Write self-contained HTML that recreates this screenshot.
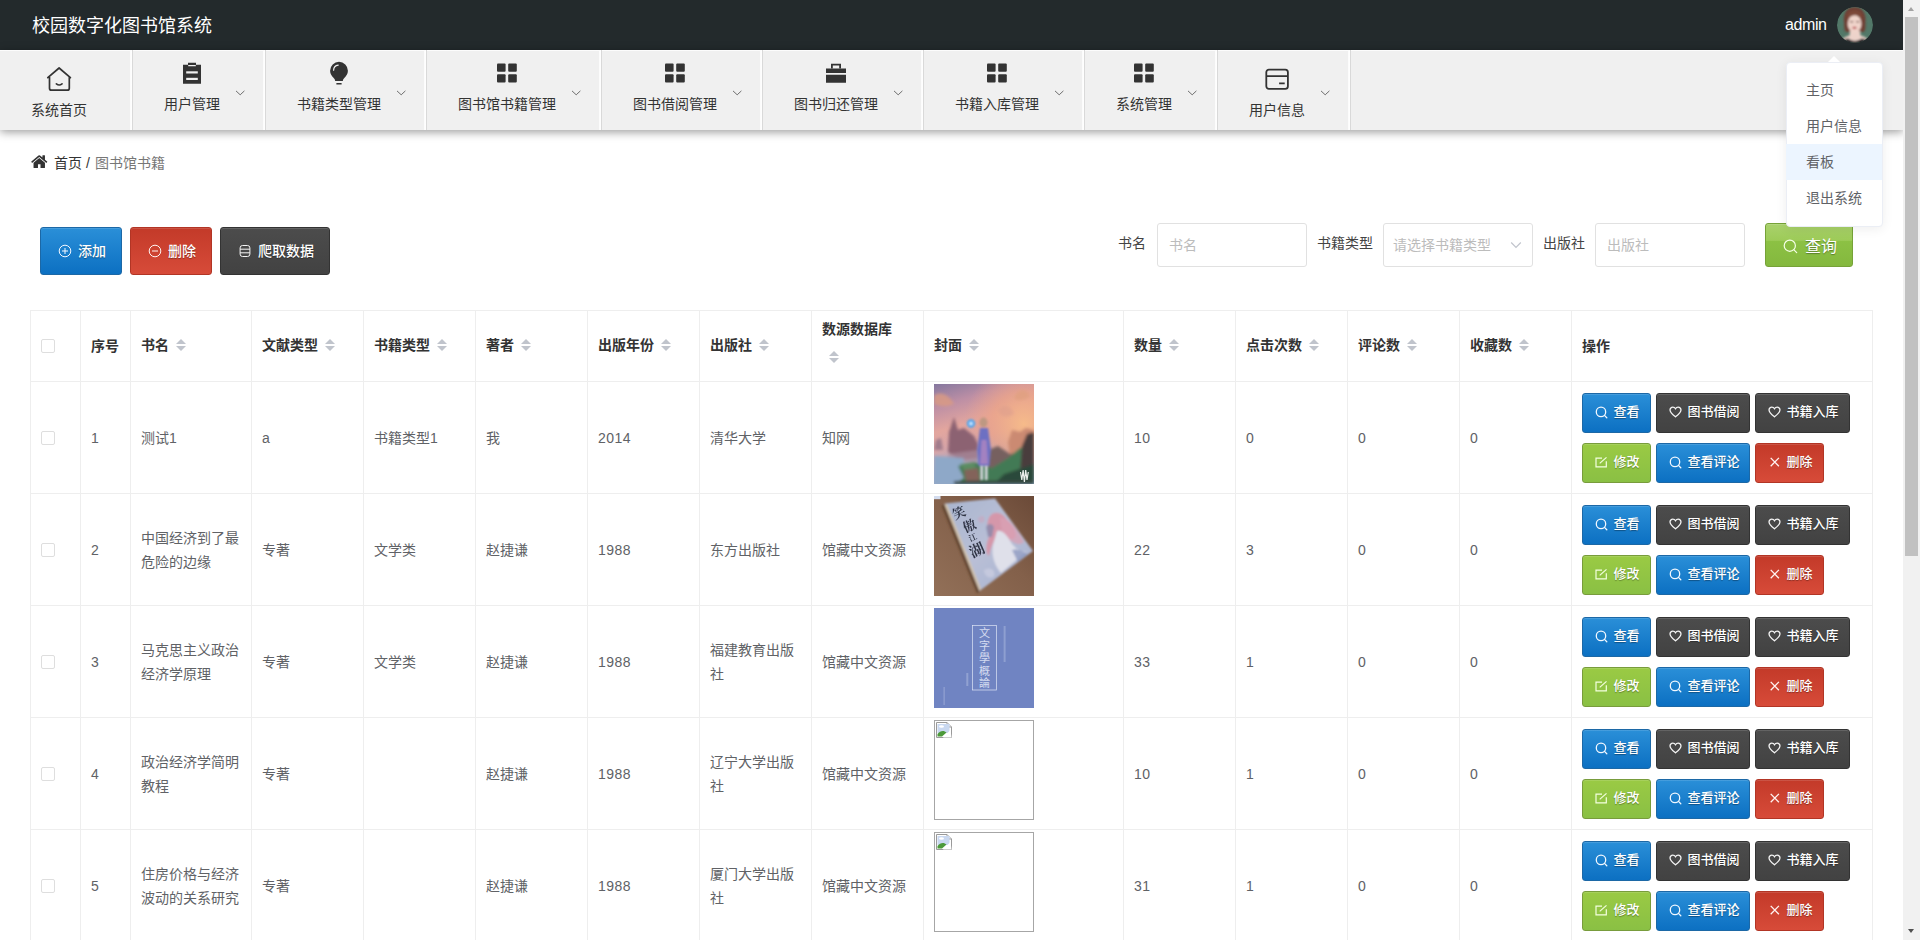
<!DOCTYPE html>
<html lang="zh-CN">
<head>
<meta charset="utf-8">
<title>校园数字化图书馆系统</title>
<style>
*{box-sizing:border-box;margin:0;padding:0}
html,body{width:1920px;height:940px;overflow:hidden;background:#fff}
body{position:relative;font-family:"Liberation Sans","Noto Sans CJK SC",sans-serif;font-size:14px;color:#606266}
.abs{position:absolute}
/* scrollbar */
#sb{position:absolute;left:1903px;top:0;width:17px;height:940px;background:#f1f1f1}
#sb .thumb{position:absolute;left:2px;top:17px;width:13px;height:539px;background:#c1c1c1}
#sb .up{position:absolute;left:5px;top:7px;width:0;height:0;border-left:3.5px solid transparent;border-right:3.5px solid transparent;border-bottom:4px solid #a3a3a3}
#sb .down{position:absolute;left:5px;top:929px;width:0;height:0;border-left:3.5px solid transparent;border-right:3.5px solid transparent;border-top:4px solid #505050}
/* header */
#hd{position:absolute;left:0;top:0;width:1903px;height:50px;background:#232a2c}
#hd .title{position:absolute;left:32px;top:1px;height:50px;line-height:50px;font-size:18px;color:#fff;white-space:nowrap}
#hd .user{position:absolute;left:1785px;top:0;height:50px;line-height:50px;font-size:16px;color:#fff;letter-spacing:-0.4px}
#avatar{position:absolute;left:1837px;top:7px;width:36px;height:36px;border-radius:50%;overflow:hidden}
/* nav */
#nav{position:absolute;left:0;top:50px;width:1903px;height:80px;background:#f0f0f0;border-top:1px solid #fcfcfc;box-shadow:0 2px 9px rgba(0,0,0,.4)}
.ni{position:absolute;top:-1px;height:80px}
.ni .sep{position:absolute;right:0;top:0;width:3px;height:80px;background:linear-gradient(90deg,#fbfbfb 0,#fff 66%,#d9d9d9 66%)}
.ni .t{position:absolute;left:31px;white-space:nowrap;font-size:14px;color:#333;line-height:20px}
.ni .ar{position:absolute;top:39px;width:12px;height:8px}
.ni svg.ic{position:absolute}
/* breadcrumb */
#bc{position:absolute;left:30px;top:153px;height:20px;line-height:20px;font-size:14px;color:#333;white-space:nowrap}
/* buttons */
.btn{position:absolute;border-radius:3px;color:#fff;font-size:14px;font-weight:500;white-space:nowrap;text-shadow:0 1px 1px rgba(0,0,0,.35);border:1px solid rgba(0,0,0,.25);box-shadow:inset 0 1px 0 rgba(255,255,255,.13)}
.b-blue{background:linear-gradient(#2a8fd8,#0c70c2);border-color:#1c68a6}
.b-red{background:linear-gradient(#c33a29,#d74b39);border-color:#b23525}
.b-dark{background:linear-gradient(#4c4c4c,#424242);border-color:#333}
.b-green{background:linear-gradient(#9aca44,#8ac044);border-color:#789c3c}
.b-gloss{background:linear-gradient(#a9d16c 0,#9dcb58 39%,#8cc144 41%,#84b83e 100%);border-color:#76a238}
.rb{font-size:13px}
.btn svg{position:absolute}
.btn span{position:absolute;line-height:20px}
/* form */
.lbl{position:absolute;font-size:14px;color:#444;line-height:20px;white-space:nowrap}
.inp{position:absolute;top:223px;width:150px;height:44px;border:1px solid #e1e1e1;border-radius:3px;background:#fff;color:#bcbcbc;font-size:14px;line-height:42px;padding-left:11px;white-space:nowrap}
/* table */
#tb{position:absolute;left:30px;top:310px;width:1843px;height:640px;border-left:1px solid #eee;border-top:1px solid #eee}
.vl{position:absolute;top:311px;width:1px;height:629px;background:#eee}
.hl{position:absolute;left:31px;width:1842px;height:1px;background:#eee}
.th{position:absolute;font-size:14px;font-weight:bold;color:#333;line-height:23px;white-space:nowrap}
.td{position:absolute;font-size:14px;color:#606266;line-height:24px}
.num{letter-spacing:.5px}
.cb{position:absolute;left:41px;width:14px;height:14px;border:1px solid #dedede;border-radius:2px;background:#fff}
.sort{position:absolute;width:10px;height:14px}
.sort:before,.sort:after{content:"";position:absolute;left:0;border:5px solid transparent}
.sort:before{top:-4px;border-bottom-color:#c0c4cc}
.sort:after{top:8px;border-top-color:#c0c4cc}
/* dropdown */
#dd{position:absolute;left:1785.500px;top:61.500px;width:97px;height:165px;background:#fff;border:1px solid #ebeef5;border-radius:4px;box-shadow:0 2px 12px rgba(0,0,0,.07)}
#dd div{position:absolute;left:-.5px;width:96px;height:36px;line-height:36px;padding-left:20px;font-size:14px;color:#606266;white-space:nowrap}
#dd div.on{background:#ecf5ff}
#dd:before{content:"";position:absolute;left:41px;top:-7px;border:6px solid transparent;border-top-width:0;border-bottom-color:#fff}
</style>
</head>
<body>
<div id="hd"><div class="title">校园数字化图书馆系统</div><div class="user">admin</div>
<svg id="avatar" width="36" height="36" viewBox="0 0 36 36"><defs><filter id="avb" x="-20%" y="-20%" width="140%" height="140%"><feGaussianBlur stdDeviation="0.900"/></filter><clipPath id="avc"><circle cx="18" cy="18" r="18"/></clipPath></defs>
<g clip-path="url(#avc)"><rect width="36" height="36" fill="#527868"/><g filter="url(#avb)">
<path d="M17.500 0C9 0 6 7.500 7 15C7.500 20 6.500 23.500 9.500 25L26.500 25C29.500 22.500 28 19 28.500 15C29.500 7.500 26 0 17.500 0z" fill="#6f4034"/>
<path d="M13 24L12.500 28.500C9 29.500 6 31 3.500 34L3.500 37H32.500V34C30 31 27 29.500 23.500 28.500L23 24z" fill="#edd3ca"/>
<ellipse cx="17.600" cy="16.800" rx="6.900" ry="8.900" fill="#f0d4ca"/>
<path d="M10.300 13C11.500 9 14.500 7.800 18 8.200C21 7.500 24 9 25.200 13.500C26.500 7 23 3.200 17.500 3.200C12 3.200 9.200 7 10.300 13z" fill="#7d4838"/>
<ellipse cx="17.500" cy="20.800" rx="2.200" ry="1.100" fill="#b9444d"/>
<path d="M13 14.800h3.200M19.200 14.800h3.200" stroke="#5e423c" stroke-width="1"/>
<path d="M0 37C3 33.500 8 32 11.500 31.500C14 34.800 21.500 34.800 24.300 31.500C28 32 33 33.500 36 37z" fill="#1b1f21"/>
</g></g></svg>

</div>
<div id="nav">
<div class="ni" style="left:0px;width:133px">
<svg class="ic" style="left:46px;top:16px" width="26" height="26" viewBox="0 0 26 26"><path fill="none" stroke="#333" stroke-width="1.700" stroke-linejoin="round" stroke-linecap="round" d="M3.500 11.300V22.200a2 2 0 0 0 2 2H21.300a2 2 0 0 0 2-2V11.300 M1.800 11.700L13.100 2L24.400 11.700"/><path fill="none" stroke="#333" stroke-width="1.700" stroke-linecap="round" d="M10.400 17.900q2.800 2.200 5.600 0"/></svg>
<div class="t" style="top:50px">系统首页</div>
<div class="sep"></div></div>
<div class="ni" style="left:133px;width:133px">
<svg class="ic" style="left:49px;top:12px" width="20" height="22" viewBox="0 0 20 22"><path fill="#333" d="M1 2.7h5.2v1.6h7.6V2.7H19v19H1z M6 0.8h8v2.3H6z"/><rect x="4.2" y="9.3" width="11.6" height="2.2" fill="#f0f0f0"/><rect x="4.2" y="15.8" width="11.6" height="2.2" fill="#f0f0f0"/></svg>
<div class="t" style="top:44px">用户管理</div>
<svg class="ar" style="left:102px" width="12" height="8" viewBox="0 0 12 8"><path d="M1 1.900L5.200 5.800L9.400 1.900" fill="none" stroke="#6e6e6e" stroke-width="1"/></svg>
<div class="sep"></div></div>
<div class="ni" style="left:266px;width:161px">
<svg class="ic" style="left:63px;top:11px" width="20" height="24" viewBox="0 0 20 24"><path fill="#333" d="M10 0.8a8.9 8.9 0 0 1 8.9 8.9c0 3.2-1.7 5.4-3.6 7.2-.9.9-1.3 1.700-1.500 3.200H6.200c-.2-1.500-.6-2.300-1.500-3.200C2.800 15.100 1.100 12.900 1.100 9.700A8.900 8.900 0 0 1 10 .8z"/><rect x="7.3" y="21.9" width="5.400" height="1.600" rx=".5" fill="#333"/><path d="M4.600 9.200a5.300 5.300 0 0 1 4.600-5.100" fill="none" stroke="#f0f0f0" stroke-width="1.200" stroke-linecap="round"/></svg>
<div class="t" style="top:44px">书籍类型管理</div>
<svg class="ar" style="left:130px" width="12" height="8" viewBox="0 0 12 8"><path d="M1 1.900L5.200 5.800L9.400 1.900" fill="none" stroke="#6e6e6e" stroke-width="1"/></svg>
<div class="sep"></div></div>
<div class="ni" style="left:427px;width:175px">
<svg class="ic" style="left:70px;top:13px" width="20" height="20" viewBox="0 0 20 20"><g fill="#333"><rect x="0" y="0.5" width="8.6" height="8.2" rx="1"/><rect x="11.2" y="0.5" width="8.6" height="8.2" rx="1"/><rect x="0" y="11.3" width="8.6" height="8.2" rx="1"/><rect x="11.2" y="11.3" width="8.6" height="8.2" rx="1"/></g></svg>
<div class="t" style="top:44px">图书馆书籍管理</div>
<svg class="ar" style="left:144px" width="12" height="8" viewBox="0 0 12 8"><path d="M1 1.900L5.200 5.800L9.400 1.900" fill="none" stroke="#6e6e6e" stroke-width="1"/></svg>
<div class="sep"></div></div>
<div class="ni" style="left:602px;width:161px">
<svg class="ic" style="left:63px;top:13px" width="20" height="20" viewBox="0 0 20 20"><g fill="#333"><rect x="0" y="0.5" width="8.6" height="8.2" rx="1"/><rect x="11.2" y="0.5" width="8.6" height="8.2" rx="1"/><rect x="0" y="11.3" width="8.6" height="8.2" rx="1"/><rect x="11.2" y="11.3" width="8.6" height="8.2" rx="1"/></g></svg>
<div class="t" style="top:44px">图书借阅管理</div>
<svg class="ar" style="left:130px" width="12" height="8" viewBox="0 0 12 8"><path d="M1 1.900L5.200 5.800L9.400 1.900" fill="none" stroke="#6e6e6e" stroke-width="1"/></svg>
<div class="sep"></div></div>
<div class="ni" style="left:763px;width:161px">
<svg class="ic" style="left:63px;top:13px" width="20" height="20" viewBox="0 0 20 20"><path fill="#333" d="M0 5.400h20v4.500H0z M0 11.800h20v8H0z"/><path fill="none" stroke="#333" stroke-width="1.800" d="M5.900 5.600V1.600h8.200v4"/></svg>
<div class="t" style="top:44px">图书归还管理</div>
<svg class="ar" style="left:130px" width="12" height="8" viewBox="0 0 12 8"><path d="M1 1.900L5.200 5.800L9.400 1.900" fill="none" stroke="#6e6e6e" stroke-width="1"/></svg>
<div class="sep"></div></div>
<div class="ni" style="left:924px;width:161px">
<svg class="ic" style="left:63px;top:13px" width="20" height="20" viewBox="0 0 20 20"><g fill="#333"><rect x="0" y="0.5" width="8.6" height="8.2" rx="1"/><rect x="11.2" y="0.5" width="8.6" height="8.2" rx="1"/><rect x="0" y="11.3" width="8.6" height="8.2" rx="1"/><rect x="11.2" y="11.3" width="8.6" height="8.2" rx="1"/></g></svg>
<div class="t" style="top:44px">书籍入库管理</div>
<svg class="ar" style="left:130px" width="12" height="8" viewBox="0 0 12 8"><path d="M1 1.900L5.200 5.800L9.400 1.900" fill="none" stroke="#6e6e6e" stroke-width="1"/></svg>
<div class="sep"></div></div>
<div class="ni" style="left:1085px;width:133px">
<svg class="ic" style="left:49px;top:13px" width="20" height="20" viewBox="0 0 20 20"><g fill="#333"><rect x="0" y="0.5" width="8.6" height="8.2" rx="1"/><rect x="11.2" y="0.5" width="8.6" height="8.2" rx="1"/><rect x="0" y="11.3" width="8.6" height="8.2" rx="1"/><rect x="11.2" y="11.3" width="8.6" height="8.2" rx="1"/></g></svg>
<div class="t" style="top:44px">系统管理</div>
<svg class="ar" style="left:102px" width="12" height="8" viewBox="0 0 12 8"><path d="M1 1.900L5.200 5.800L9.400 1.900" fill="none" stroke="#6e6e6e" stroke-width="1"/></svg>
<div class="sep"></div></div>
<div class="ni" style="left:1218px;width:133px">
<svg class="ic" style="left:46px;top:18px" width="26" height="23" viewBox="0 0 26 23"><rect x="2.300" y="1.700" width="21.600" height="19.200" rx="2.600" fill="none" stroke="#333" stroke-width="1.800"/><path stroke="#333" stroke-width="1.800" d="M2.300 8.100H23.900 M15.100 15.300H20.700"/></svg>
<div class="t" style="top:50px">用户信息</div>
<svg class="ar" style="left:102px" width="12" height="8" viewBox="0 0 12 8"><path d="M1 1.900L5.200 5.800L9.400 1.900" fill="none" stroke="#6e6e6e" stroke-width="1"/></svg>
<div class="sep"></div></div>
</div>
<div id="bc"><svg width="16.500" height="13.400" viewBox="0 225 1664 1330" preserveAspectRatio="none" style="position:absolute;left:1px;top:1.900px"><path fill="#333" d="M1408 992v480q0 26-19 45t-45 19h-384v-384h-256v384h-384q-26 0-45-19t-19-45v-480q0-1 .5-3t.5-3l575-474 575 474q1 2 1 6zm223-69l-62 74q-8 9-21 11h-3q-13 0-21-7l-692-577-692 577q-12 8-24 7-13-2-21-11l-62-74q-8-10-7-23.500t11-21.500l719-599q32-26 76-26t76 26l244 204v-195q0-14 9-23t23-9h192q14 0 23 9t9 23v408l219 182q10 8 11 21.500t-7 23.500z"/></svg><span style="position:absolute;left:24px;top:0">首页</span><span style="position:absolute;left:56px;top:0;color:#333">/</span><span style="position:absolute;left:65px;top:0;color:#777">图书馆书籍</span></div>
<div class="btn b-blue" style="left:40px;top:227px;width:82px;height:48px"><svg style="left:17px;top:15.700px" width="14" height="14" viewBox="0 0 14 14"><g fill="none" stroke="#f4f8ff" stroke-width="1"><circle cx="7" cy="7" r="5.800"/><path d="M4 7h6M7 4v6"/></g></svg><span style="left:37px;top:13px">添加</span></div>
<div class="btn b-red" style="left:130px;top:227px;width:82px;height:48px"><svg style="left:16.800px;top:15.700px" width="14" height="14" viewBox="0 0 14 14"><g fill="none" stroke="#fff4f2" stroke-width="1"><circle cx="7" cy="7" r="5.800"/><path d="M4 7h6"/></g></svg><span style="left:37px;top:13px">删除</span></div>
<div class="btn b-dark" style="left:220px;top:227px;width:110px;height:48px"><svg style="left:16.800px;top:15.800px" width="14" height="14" viewBox="0 0 14 14"><g fill="none" stroke="#f4f4f4" stroke-width="1"><rect x="2.100" y="1.500" width="9.800" height="11" rx="2.400"/><path d="M2.100 5.200h9.800M2.100 8.800h9.800"/></g></svg><span style="left:37px;top:13px">爬取数据</span></div>
<div class="lbl" style="left:1118px;top:233px">书名</div>
<div class="inp" style="left:1157px">书名</div>
<div class="lbl" style="left:1317px;top:233px">书籍类型</div>
<div class="inp" style="left:1383px;padding-left:9px">请选择书籍类型<svg style="position:absolute;left:126px;top:17px" width="12" height="8" viewBox="0 0 12 8"><path d="M1.200 1.500L6 6.300L10.800 1.500" fill="none" stroke="#c0c4cc" stroke-width="1.200"/></svg></div>
<div class="lbl" style="left:1543px;top:233px">出版社</div>
<div class="inp" style="left:1595px">出版社</div>
<div class="btn b-gloss" style="left:1765px;top:223px;width:88px;height:44px;font-size:16px;font-weight:400"><svg style="left:16px;top:14px" width="16" height="16" viewBox="0 0 16 16"><g fill="none" stroke="#f6ffe8" stroke-width="1.200" stroke-linecap="round"><circle cx="7.800" cy="7.700" r="5.600"/><path d="M12 11.900L14.700 14.600"/></g></svg><span style="left:39px;top:13px">查询</span></div>
<div id="tb"></div>
<div class="vl" style="left:80px"></div>
<div class="vl" style="left:130px"></div>
<div class="vl" style="left:251px"></div>
<div class="vl" style="left:363px"></div>
<div class="vl" style="left:475px"></div>
<div class="vl" style="left:587px"></div>
<div class="vl" style="left:699px"></div>
<div class="vl" style="left:811px"></div>
<div class="vl" style="left:923px"></div>
<div class="vl" style="left:1123px"></div>
<div class="vl" style="left:1235px"></div>
<div class="vl" style="left:1347px"></div>
<div class="vl" style="left:1459px"></div>
<div class="vl" style="left:1571px"></div>
<div class="vl" style="left:1872px"></div>
<div class="hl" style="top:381px"></div>
<div class="hl" style="top:493px"></div>
<div class="hl" style="top:605px"></div>
<div class="hl" style="top:717px"></div>
<div class="hl" style="top:829px"></div>
<div class="cb" style="top:339px"></div>
<div class="th" style="left:91px;top:335px">序号</div>
<div class="th" style="left:141px;top:334px">书名</div>
<div class="sort" style="left:176px;top:338px"></div>
<div class="th" style="left:262px;top:334px">文献类型</div>
<div class="sort" style="left:325px;top:338px"></div>
<div class="th" style="left:374px;top:334px">书籍类型</div>
<div class="sort" style="left:437px;top:338px"></div>
<div class="th" style="left:486px;top:334px">著者</div>
<div class="sort" style="left:521px;top:338px"></div>
<div class="th" style="left:598px;top:334px">出版年份</div>
<div class="sort" style="left:661px;top:338px"></div>
<div class="th" style="left:710px;top:334px">出版社</div>
<div class="sort" style="left:759px;top:338px"></div>
<div class="th" style="left:934px;top:334px">封面</div>
<div class="sort" style="left:969px;top:338px"></div>
<div class="th" style="left:1134px;top:334px">数量</div>
<div class="sort" style="left:1169px;top:338px"></div>
<div class="th" style="left:1246px;top:334px">点击次数</div>
<div class="sort" style="left:1309px;top:338px"></div>
<div class="th" style="left:1358px;top:334px">评论数</div>
<div class="sort" style="left:1407px;top:338px"></div>
<div class="th" style="left:1470px;top:334px">收藏数</div>
<div class="sort" style="left:1519px;top:338px"></div>
<div class="th" style="left:1582px;top:335px">操作</div>
<div class="th" style="left:822px;top:318px">数源数据库</div>
<div class="sort" style="left:829px;top:350px"></div>
<div class="cb" style="top:431px"></div>
<div class="td num" style="left:91px;top:425.5px">1</div>
<div class="td" style="left:141px;top:425.5px">测试1</div>
<div class="td" style="left:262px;top:425.5px">a</div>
<div class="td" style="left:374px;top:425.5px">书籍类型1</div>
<div class="td" style="left:486px;top:425.5px">我</div>
<div class="td num" style="left:598px;top:425.5px">2014</div>
<div class="td" style="left:710px;top:425.5px">清华大学</div>
<div class="td" style="left:822px;top:425.5px">知网</div>
<div class="td num" style="left:1134px;top:425.5px">10</div>
<div class="td num" style="left:1246px;top:425.5px">0</div>
<div class="td num" style="left:1358px;top:425.5px">0</div>
<div class="td num" style="left:1470px;top:425.5px">0</div>
<div class="abs" style="left:934px;top:384px;width:100px;height:100px;overflow:hidden"><svg width="100" height="100" viewBox="0 0 100 100"><defs>
<linearGradient id="c1s" x1="0" y1="0" x2="0.300" y2="1"><stop offset="0" stop-color="#85789f"/><stop offset="0.220" stop-color="#bd8fa5"/><stop offset="0.450" stop-color="#e3a69e"/><stop offset="0.620" stop-color="#d7a5a8"/><stop offset="0.800" stop-color="#a9a9c2"/><stop offset="1" stop-color="#8ea8c6"/></linearGradient>
<radialGradient id="c1g" cx="0.900" cy="0.400" r="0.600"><stop offset="0" stop-color="#f6bb8a"/><stop offset="0.550" stop-color="#eca489" stop-opacity="0.750"/><stop offset="1" stop-color="#e6a090" stop-opacity="0"/></radialGradient>
<filter id="c1b" x="-10%" y="-10%" width="120%" height="120%"><feGaussianBlur stdDeviation="1.500"/></filter>
<filter id="c1c" x="-10%" y="-10%" width="120%" height="120%"><feGaussianBlur stdDeviation="1"/></filter></defs>
<rect width="100" height="100" fill="url(#c1s)"/><rect width="100" height="100" fill="url(#c1g)"/>
<g filter="url(#c1b)">
<path d="M0 12C6 6 16 12 20 20C12 24 4 22 0 20z" fill="#d99a84" opacity="0.850"/>
<path d="M80 14C84 4 92 4 96 12C92 16 84 18 80 14z" fill="#e0a080" opacity="0.800"/>
<path d="M64 26C70 18 78 22 80 30C74 34 66 34 64 26z" fill="#dd9e8e" opacity="0.600"/>
<path d="M14 68L15 48L20 33L24 46L30 44L40 52L44 60L44 74L26 76z" fill="#8c6272"/>
<path d="M14 70L44 66L44 78L14 78z" fill="#a98c9c" opacity="0.700"/>
<path d="M0 66L2 56L7 54L9 66z" fill="#a07c8c"/>
<path d="M0 72L30 74L26 100L0 100z" fill="#8ea8c8"/>
<path d="M74 58L78 46L86 48L92 44L100 46L100 70L76 72z" fill="#cb8a72"/>
<path d="M54 66L64 62L76 70L100 66L100 100L50 100z" fill="#76605f"/>
<path d="M24 82L40 78L58 84L74 74L86 64L100 58L100 100L20 100L30 94z" fill="#437a54"/>
<path d="M88 62L93 50L100 48L100 84L86 90z" fill="#4a3c3e"/>
<path d="M70 90L100 80L100 100L60 100z" fill="#2c4a3a"/>
<path d="M26 80L40 78L42 84L30 86z" fill="#5c8c62"/>
<path d="M30 86L44 84L46 98L32 97z" fill="#83635a"/>
<path d="M20 97L100 96L100 100L20 100z" fill="#34463f"/>
</g>
<g filter="url(#c1c)">
<circle cx="37" cy="39.500" r="4.200" fill="#4da6ee"/><circle cx="37" cy="39.500" r="1.600" fill="#e6f6ff"/>
<ellipse cx="49.500" cy="38.500" rx="4" ry="5" fill="#be9882"/>
<path d="M46 44L54 44L57 66L55.500 82L44.500 82L43 66z" fill="#6d6fc2"/>
<path d="M47.500 56L52.500 56L54 80L46 80z" fill="#c08cc0" opacity="0.650"/>
<path d="M46.500 82L49 82L49 96L46.500 96zM51 82L53.500 82L53.500 96L51 96z" fill="#e4e0ea"/>
</g>
<path d="M86.500 88l1.300 8l1.300-10l1.300 12l1.300-12l1.300 10l1.300-8" stroke="#fff" stroke-width="1.200" fill="none" opacity="0.900"/>
</svg>
</div>
<div class="btn rb b-blue" style="left:1582px;top:393px;width:68.7px;height:40px"><svg style="left:12px;top:12px" width="14" height="14" viewBox="0 0 14 14"><g fill="none" stroke="#f2f8ff" stroke-width="1.300" stroke-linecap="round"><circle cx="6" cy="5.900" r="4.700"/><path d="M9.500 9.400L11.800 11.700"/></g></svg><span style="left:30.500px;top:8px">查看</span></div>
<div class="btn rb b-dark" style="left:1656px;top:393px;width:93.7px;height:40px"><svg style="left:11.8px;top:12.300px" width="13" height="12.070" viewBox="0 0 14 13"><path fill="none" stroke="#f6f6f6" stroke-width="1.400" d="M7 11.700C4 9.400 1.100 7 1.100 4.300A3 3 0 0 1 4.100 1.300C5.400 1.300 6.400 2 7 3C7.600 2 8.600 1.300 9.900 1.300A3 3 0 0 1 12.900 4.300C12.900 7 10 9.400 7 11.700z"/></svg><span style="left:30.500px;top:8px">图书借阅</span></div>
<div class="btn rb b-dark" style="left:1755px;top:393px;width:95px;height:40px"><svg style="left:12.3px;top:12.300px" width="13" height="12.070" viewBox="0 0 14 13"><path fill="none" stroke="#f6f6f6" stroke-width="1.400" d="M7 11.700C4 9.400 1.100 7 1.100 4.300A3 3 0 0 1 4.100 1.300C5.400 1.300 6.400 2 7 3C7.600 2 8.600 1.300 9.900 1.300A3 3 0 0 1 12.900 4.300C12.900 7 10 9.400 7 11.700z"/></svg><span style="left:30.500px;top:8px">书籍入库</span></div>
<div class="btn rb b-green" style="left:1582px;top:443px;width:68.7px;height:40px"><svg style="left:12px;top:12px" width="13" height="13" viewBox="0 0 13 13"><g fill="none" stroke="#f4ffe0" stroke-width="1.200"><path d="M7 2.100H1V10.900H11.300V5.300"/><path d="M4.700 7.400L11.500 1.400"/></g></svg><span style="left:30.500px;top:8px">修改</span></div>
<div class="btn rb b-blue" style="left:1656px;top:443px;width:93.7px;height:40px"><svg style="left:12px;top:12px" width="14" height="14" viewBox="0 0 14 14"><g fill="none" stroke="#f2f8ff" stroke-width="1.300" stroke-linecap="round"><circle cx="6" cy="5.900" r="4.700"/><path d="M9.500 9.400L11.800 11.700"/></g></svg><span style="left:30.500px;top:8px">查看评论</span></div>
<div class="btn rb b-red" style="left:1755px;top:443px;width:68.7px;height:40px"><svg style="left:14px;top:13px" width="10" height="10" viewBox="0 0 10 10"><path d="M.7 .9L8.900 9.300M8.900 .9L.7 9.300" fill="none" stroke="#fff4f2" stroke-width="1.300"/></svg><span style="left:30.500px;top:8px">删除</span></div>
<div class="cb" style="top:543px"></div>
<div class="td num" style="left:91px;top:537.5px">2</div>
<div class="td" style="left:141px;top:525.5px">中国经济到了最<br>危险的边缘</div>
<div class="td" style="left:262px;top:537.5px">专著</div>
<div class="td" style="left:374px;top:537.5px">文学类</div>
<div class="td" style="left:486px;top:537.5px">赵捷谦</div>
<div class="td num" style="left:598px;top:537.5px">1988</div>
<div class="td" style="left:710px;top:537.5px">东方出版社</div>
<div class="td" style="left:822px;top:537.5px">馆藏中文资源</div>
<div class="td num" style="left:1134px;top:537.5px">22</div>
<div class="td num" style="left:1246px;top:537.5px">3</div>
<div class="td num" style="left:1358px;top:537.5px">0</div>
<div class="td num" style="left:1470px;top:537.5px">0</div>
<div class="abs" style="left:934px;top:496px;width:100px;height:100px;overflow:hidden"><svg width="100" height="100" viewBox="0 0 100 100"><defs>
<linearGradient id="c2w" x1="1" y1="0" x2="0" y2="1"><stop offset="0" stop-color="#6b4a38"/><stop offset="0.450" stop-color="#83604a"/><stop offset="1" stop-color="#927058"/></linearGradient>
<linearGradient id="c2k" x1="0" y1="0" x2="1" y2="1"><stop offset="0" stop-color="#a9b5cf"/><stop offset="0.500" stop-color="#b9bfd6"/><stop offset="1" stop-color="#a4b0d0"/></linearGradient>
<filter id="c2b" x="-10%" y="-10%" width="120%" height="120%"><feGaussianBlur stdDeviation="1.200"/></filter>
<filter id="c2t" x="-10%" y="-10%" width="120%" height="120%"><feGaussianBlur stdDeviation="0.350"/></filter></defs>
<rect width="100" height="100" fill="url(#c2w)"/>
<rect x="0" y="0" width="6.500" height="3.200" fill="#d3dcee"/>
<g filter="url(#c2b)">
<path d="M7.500 10L11 8L46 95L43 97.500z" fill="#654630"/>
<path d="M10.500 7.500L61 2.500L99 55L45.500 95z" fill="url(#c2k)"/>
<path d="M10.500 8.500L12.800 8L47 93L45.500 95z" fill="#d4c4ac"/>
<path d="M56 20C61 14 69 17 73 24C79 30 83 36 81 42C76 45 70 43 66 38C61 41 57 50 55 60C51 58 52 47 55 41C53 33 52 26 56 20z" fill="#d597aa"/>
<path d="M66 22C74 20 84 34 90 46C84 52 74 44 68 36z" fill="#d9a2b4" opacity="0.750"/>
<path d="M63 35C68 33 74 40 78 48C84 55 90 57 93 55L67 77C61 70 57 60 59 49z" fill="#dfe0ea"/>
<path d="M52 31C54 27 58 27 60 31L58 41L54 41z" fill="#7e86aa" opacity="0.700"/>
<path d="M44 22C48 18 52 20 50 26C46 28 44 26 44 22z" fill="#c8a8c0" opacity="0.700"/>
<path d="M78 54C84 52 90 56 94 58L84 66z" fill="#8b97bf" opacity="0.800"/>
<path d="M50 74C56 70 62 74 60 80C56 84 50 80 50 74z" fill="#c9cde0" opacity="0.800"/>
</g>
<g filter="url(#c2t)" font-family="'Liberation Serif','Noto Serif CJK SC',serif" font-weight="bold" fill="#1c2030" opacity="0.880" text-anchor="middle">
<text transform="translate(27 21) rotate(-24)" font-size="13">笑</text>
<text transform="translate(37.500 34) rotate(-24)" font-size="13">傲</text>
<text transform="translate(40 44) rotate(-24)" font-size="8">江</text>
<text transform="translate(45 59) rotate(-24)" font-size="15">湖</text></g>
</svg>
</div>
<div class="btn rb b-blue" style="left:1582px;top:505px;width:68.7px;height:40px"><svg style="left:12px;top:12px" width="14" height="14" viewBox="0 0 14 14"><g fill="none" stroke="#f2f8ff" stroke-width="1.300" stroke-linecap="round"><circle cx="6" cy="5.900" r="4.700"/><path d="M9.500 9.400L11.800 11.700"/></g></svg><span style="left:30.500px;top:8px">查看</span></div>
<div class="btn rb b-dark" style="left:1656px;top:505px;width:93.7px;height:40px"><svg style="left:11.8px;top:12.300px" width="13" height="12.070" viewBox="0 0 14 13"><path fill="none" stroke="#f6f6f6" stroke-width="1.400" d="M7 11.700C4 9.400 1.100 7 1.100 4.300A3 3 0 0 1 4.100 1.300C5.400 1.300 6.400 2 7 3C7.600 2 8.600 1.300 9.900 1.300A3 3 0 0 1 12.900 4.300C12.900 7 10 9.400 7 11.700z"/></svg><span style="left:30.500px;top:8px">图书借阅</span></div>
<div class="btn rb b-dark" style="left:1755px;top:505px;width:95px;height:40px"><svg style="left:12.3px;top:12.300px" width="13" height="12.070" viewBox="0 0 14 13"><path fill="none" stroke="#f6f6f6" stroke-width="1.400" d="M7 11.700C4 9.400 1.100 7 1.100 4.300A3 3 0 0 1 4.100 1.300C5.400 1.300 6.400 2 7 3C7.600 2 8.600 1.300 9.900 1.300A3 3 0 0 1 12.900 4.300C12.900 7 10 9.400 7 11.700z"/></svg><span style="left:30.500px;top:8px">书籍入库</span></div>
<div class="btn rb b-green" style="left:1582px;top:555px;width:68.7px;height:40px"><svg style="left:12px;top:12px" width="13" height="13" viewBox="0 0 13 13"><g fill="none" stroke="#f4ffe0" stroke-width="1.200"><path d="M7 2.100H1V10.900H11.300V5.300"/><path d="M4.700 7.400L11.500 1.400"/></g></svg><span style="left:30.500px;top:8px">修改</span></div>
<div class="btn rb b-blue" style="left:1656px;top:555px;width:93.7px;height:40px"><svg style="left:12px;top:12px" width="14" height="14" viewBox="0 0 14 14"><g fill="none" stroke="#f2f8ff" stroke-width="1.300" stroke-linecap="round"><circle cx="6" cy="5.900" r="4.700"/><path d="M9.500 9.400L11.800 11.700"/></g></svg><span style="left:30.500px;top:8px">查看评论</span></div>
<div class="btn rb b-red" style="left:1755px;top:555px;width:68.7px;height:40px"><svg style="left:14px;top:13px" width="10" height="10" viewBox="0 0 10 10"><path d="M.7 .9L8.900 9.300M8.900 .9L.7 9.300" fill="none" stroke="#fff4f2" stroke-width="1.300"/></svg><span style="left:30.500px;top:8px">删除</span></div>
<div class="cb" style="top:655px"></div>
<div class="td num" style="left:91px;top:649.5px">3</div>
<div class="td" style="left:141px;top:637.5px">马克思主义政治<br>经济学原理</div>
<div class="td" style="left:262px;top:649.5px">专著</div>
<div class="td" style="left:374px;top:649.5px">文学类</div>
<div class="td" style="left:486px;top:649.5px">赵捷谦</div>
<div class="td num" style="left:598px;top:649.5px">1988</div>
<div class="td" style="left:710px;top:637.5px">福建教育出版<br>社</div>
<div class="td" style="left:822px;top:649.5px">馆藏中文资源</div>
<div class="td num" style="left:1134px;top:649.5px">33</div>
<div class="td num" style="left:1246px;top:649.5px">1</div>
<div class="td num" style="left:1358px;top:649.5px">0</div>
<div class="td num" style="left:1470px;top:649.5px">0</div>
<div class="abs" style="left:934px;top:608px;width:100px;height:100px;overflow:hidden"><svg width="100" height="100" viewBox="0 0 100 100"><rect width="100" height="100" fill="#7084c2"/>
<rect x="38.500" y="17.500" width="24" height="64.500" fill="none" stroke="#dfe5f6" stroke-width="0.700"/>
<g font-family="'Liberation Sans','Noto Sans CJK TC',sans-serif" fill="#e4e9f8" fill-opacity="0.880" text-anchor="middle">
<text x="50.500" y="29.300" font-size="11">文</text><text x="50.500" y="41.800" font-size="11">字</text><text x="50.500" y="54.300" font-size="11">學</text><text x="50.500" y="66.800" font-size="11">概</text><text x="50.500" y="79.300" font-size="11">論</text>
</g><g fill="#dfe5f6"><rect x="69.600" y="18" width="2" height="36" opacity="0.280"/><rect x="32.300" y="65" width="2" height="13" opacity="0.300"/><rect x="9.400" y="79" width="1.500" height="18" opacity="0.250"/></g></svg>
</div>
<div class="btn rb b-blue" style="left:1582px;top:617px;width:68.7px;height:40px"><svg style="left:12px;top:12px" width="14" height="14" viewBox="0 0 14 14"><g fill="none" stroke="#f2f8ff" stroke-width="1.300" stroke-linecap="round"><circle cx="6" cy="5.900" r="4.700"/><path d="M9.500 9.400L11.800 11.700"/></g></svg><span style="left:30.500px;top:8px">查看</span></div>
<div class="btn rb b-dark" style="left:1656px;top:617px;width:93.7px;height:40px"><svg style="left:11.8px;top:12.300px" width="13" height="12.070" viewBox="0 0 14 13"><path fill="none" stroke="#f6f6f6" stroke-width="1.400" d="M7 11.700C4 9.400 1.100 7 1.100 4.300A3 3 0 0 1 4.100 1.300C5.400 1.300 6.400 2 7 3C7.600 2 8.600 1.300 9.900 1.300A3 3 0 0 1 12.900 4.300C12.900 7 10 9.400 7 11.700z"/></svg><span style="left:30.500px;top:8px">图书借阅</span></div>
<div class="btn rb b-dark" style="left:1755px;top:617px;width:95px;height:40px"><svg style="left:12.3px;top:12.300px" width="13" height="12.070" viewBox="0 0 14 13"><path fill="none" stroke="#f6f6f6" stroke-width="1.400" d="M7 11.700C4 9.400 1.100 7 1.100 4.300A3 3 0 0 1 4.100 1.300C5.400 1.300 6.400 2 7 3C7.600 2 8.600 1.300 9.900 1.300A3 3 0 0 1 12.900 4.300C12.900 7 10 9.400 7 11.700z"/></svg><span style="left:30.500px;top:8px">书籍入库</span></div>
<div class="btn rb b-green" style="left:1582px;top:667px;width:68.7px;height:40px"><svg style="left:12px;top:12px" width="13" height="13" viewBox="0 0 13 13"><g fill="none" stroke="#f4ffe0" stroke-width="1.200"><path d="M7 2.100H1V10.900H11.300V5.300"/><path d="M4.700 7.400L11.500 1.400"/></g></svg><span style="left:30.500px;top:8px">修改</span></div>
<div class="btn rb b-blue" style="left:1656px;top:667px;width:93.7px;height:40px"><svg style="left:12px;top:12px" width="14" height="14" viewBox="0 0 14 14"><g fill="none" stroke="#f2f8ff" stroke-width="1.300" stroke-linecap="round"><circle cx="6" cy="5.900" r="4.700"/><path d="M9.500 9.400L11.800 11.700"/></g></svg><span style="left:30.500px;top:8px">查看评论</span></div>
<div class="btn rb b-red" style="left:1755px;top:667px;width:68.7px;height:40px"><svg style="left:14px;top:13px" width="10" height="10" viewBox="0 0 10 10"><path d="M.7 .9L8.900 9.300M8.900 .9L.7 9.300" fill="none" stroke="#fff4f2" stroke-width="1.300"/></svg><span style="left:30.500px;top:8px">删除</span></div>
<div class="cb" style="top:767px"></div>
<div class="td num" style="left:91px;top:761.5px">4</div>
<div class="td" style="left:141px;top:749.5px">政治经济学简明<br>教程</div>
<div class="td" style="left:262px;top:761.5px">专著</div>
<div class="td" style="left:486px;top:761.5px">赵捷谦</div>
<div class="td num" style="left:598px;top:761.5px">1988</div>
<div class="td" style="left:710px;top:749.5px">辽宁大学出版<br>社</div>
<div class="td" style="left:822px;top:761.5px">馆藏中文资源</div>
<div class="td num" style="left:1134px;top:761.5px">10</div>
<div class="td num" style="left:1246px;top:761.5px">1</div>
<div class="td num" style="left:1358px;top:761.5px">0</div>
<div class="td num" style="left:1470px;top:761.5px">0</div>
<div class="abs" style="left:934px;top:720px;width:100px;height:100px;border:1px solid #a6a6a6"><svg style="position:absolute;left:1px;top:1px" width="16" height="16" viewBox="0 0 16 16"><path d="M.5 .5H11L15.500 5V15.500H.5z" fill="#fff" stroke="#9a9a9a"/><path d="M11 .5V5H15.500" fill="#e8e8e8" stroke="#9a9a9a"/><rect x="1.500" y="2" width="12" height="9" fill="#c9d8f0"/><path d="M1.500 14.500V12C4 8.500 8 8 10.500 10.500L6 14.500z" fill="#4c9a3a"/><path d="M14.500 8L7 15.500H15.500z" fill="#fff"/><ellipse cx="5.500" cy="4.500" rx="2.500" ry="1.300" fill="#fff"/></svg></div>
<div class="btn rb b-blue" style="left:1582px;top:729px;width:68.7px;height:40px"><svg style="left:12px;top:12px" width="14" height="14" viewBox="0 0 14 14"><g fill="none" stroke="#f2f8ff" stroke-width="1.300" stroke-linecap="round"><circle cx="6" cy="5.900" r="4.700"/><path d="M9.500 9.400L11.800 11.700"/></g></svg><span style="left:30.500px;top:8px">查看</span></div>
<div class="btn rb b-dark" style="left:1656px;top:729px;width:93.7px;height:40px"><svg style="left:11.8px;top:12.300px" width="13" height="12.070" viewBox="0 0 14 13"><path fill="none" stroke="#f6f6f6" stroke-width="1.400" d="M7 11.700C4 9.400 1.100 7 1.100 4.300A3 3 0 0 1 4.100 1.300C5.400 1.300 6.400 2 7 3C7.600 2 8.600 1.300 9.900 1.300A3 3 0 0 1 12.900 4.300C12.900 7 10 9.400 7 11.700z"/></svg><span style="left:30.500px;top:8px">图书借阅</span></div>
<div class="btn rb b-dark" style="left:1755px;top:729px;width:95px;height:40px"><svg style="left:12.3px;top:12.300px" width="13" height="12.070" viewBox="0 0 14 13"><path fill="none" stroke="#f6f6f6" stroke-width="1.400" d="M7 11.700C4 9.400 1.100 7 1.100 4.300A3 3 0 0 1 4.100 1.300C5.400 1.300 6.400 2 7 3C7.600 2 8.600 1.300 9.900 1.300A3 3 0 0 1 12.900 4.300C12.900 7 10 9.400 7 11.700z"/></svg><span style="left:30.500px;top:8px">书籍入库</span></div>
<div class="btn rb b-green" style="left:1582px;top:779px;width:68.7px;height:40px"><svg style="left:12px;top:12px" width="13" height="13" viewBox="0 0 13 13"><g fill="none" stroke="#f4ffe0" stroke-width="1.200"><path d="M7 2.100H1V10.900H11.300V5.300"/><path d="M4.700 7.400L11.500 1.400"/></g></svg><span style="left:30.500px;top:8px">修改</span></div>
<div class="btn rb b-blue" style="left:1656px;top:779px;width:93.7px;height:40px"><svg style="left:12px;top:12px" width="14" height="14" viewBox="0 0 14 14"><g fill="none" stroke="#f2f8ff" stroke-width="1.300" stroke-linecap="round"><circle cx="6" cy="5.900" r="4.700"/><path d="M9.500 9.400L11.800 11.700"/></g></svg><span style="left:30.500px;top:8px">查看评论</span></div>
<div class="btn rb b-red" style="left:1755px;top:779px;width:68.7px;height:40px"><svg style="left:14px;top:13px" width="10" height="10" viewBox="0 0 10 10"><path d="M.7 .9L8.900 9.300M8.900 .9L.7 9.300" fill="none" stroke="#fff4f2" stroke-width="1.300"/></svg><span style="left:30.500px;top:8px">删除</span></div>
<div class="cb" style="top:879px"></div>
<div class="td num" style="left:91px;top:873.5px">5</div>
<div class="td" style="left:141px;top:861.5px">住房价格与经济<br>波动的关系研究</div>
<div class="td" style="left:262px;top:873.5px">专著</div>
<div class="td" style="left:486px;top:873.5px">赵捷谦</div>
<div class="td num" style="left:598px;top:873.5px">1988</div>
<div class="td" style="left:710px;top:861.5px">厦门大学出版<br>社</div>
<div class="td" style="left:822px;top:873.5px">馆藏中文资源</div>
<div class="td num" style="left:1134px;top:873.5px">31</div>
<div class="td num" style="left:1246px;top:873.5px">1</div>
<div class="td num" style="left:1358px;top:873.5px">0</div>
<div class="td num" style="left:1470px;top:873.5px">0</div>
<div class="abs" style="left:934px;top:832px;width:100px;height:100px;border:1px solid #a6a6a6"><svg style="position:absolute;left:1px;top:1px" width="16" height="16" viewBox="0 0 16 16"><path d="M.5 .5H11L15.500 5V15.500H.5z" fill="#fff" stroke="#9a9a9a"/><path d="M11 .5V5H15.500" fill="#e8e8e8" stroke="#9a9a9a"/><rect x="1.500" y="2" width="12" height="9" fill="#c9d8f0"/><path d="M1.500 14.500V12C4 8.500 8 8 10.500 10.500L6 14.500z" fill="#4c9a3a"/><path d="M14.500 8L7 15.500H15.500z" fill="#fff"/><ellipse cx="5.500" cy="4.500" rx="2.500" ry="1.300" fill="#fff"/></svg></div>
<div class="btn rb b-blue" style="left:1582px;top:841px;width:68.7px;height:40px"><svg style="left:12px;top:12px" width="14" height="14" viewBox="0 0 14 14"><g fill="none" stroke="#f2f8ff" stroke-width="1.300" stroke-linecap="round"><circle cx="6" cy="5.900" r="4.700"/><path d="M9.500 9.400L11.800 11.700"/></g></svg><span style="left:30.500px;top:8px">查看</span></div>
<div class="btn rb b-dark" style="left:1656px;top:841px;width:93.7px;height:40px"><svg style="left:11.8px;top:12.300px" width="13" height="12.070" viewBox="0 0 14 13"><path fill="none" stroke="#f6f6f6" stroke-width="1.400" d="M7 11.700C4 9.400 1.100 7 1.100 4.300A3 3 0 0 1 4.100 1.300C5.400 1.300 6.400 2 7 3C7.600 2 8.600 1.300 9.900 1.300A3 3 0 0 1 12.900 4.300C12.900 7 10 9.400 7 11.700z"/></svg><span style="left:30.500px;top:8px">图书借阅</span></div>
<div class="btn rb b-dark" style="left:1755px;top:841px;width:95px;height:40px"><svg style="left:12.3px;top:12.300px" width="13" height="12.070" viewBox="0 0 14 13"><path fill="none" stroke="#f6f6f6" stroke-width="1.400" d="M7 11.700C4 9.400 1.100 7 1.100 4.300A3 3 0 0 1 4.100 1.300C5.400 1.300 6.400 2 7 3C7.600 2 8.600 1.300 9.900 1.300A3 3 0 0 1 12.900 4.300C12.900 7 10 9.400 7 11.700z"/></svg><span style="left:30.500px;top:8px">书籍入库</span></div>
<div class="btn rb b-green" style="left:1582px;top:891px;width:68.7px;height:40px"><svg style="left:12px;top:12px" width="13" height="13" viewBox="0 0 13 13"><g fill="none" stroke="#f4ffe0" stroke-width="1.200"><path d="M7 2.100H1V10.900H11.300V5.300"/><path d="M4.700 7.400L11.500 1.400"/></g></svg><span style="left:30.500px;top:8px">修改</span></div>
<div class="btn rb b-blue" style="left:1656px;top:891px;width:93.7px;height:40px"><svg style="left:12px;top:12px" width="14" height="14" viewBox="0 0 14 14"><g fill="none" stroke="#f2f8ff" stroke-width="1.300" stroke-linecap="round"><circle cx="6" cy="5.900" r="4.700"/><path d="M9.500 9.400L11.800 11.700"/></g></svg><span style="left:30.500px;top:8px">查看评论</span></div>
<div class="btn rb b-red" style="left:1755px;top:891px;width:68.7px;height:40px"><svg style="left:14px;top:13px" width="10" height="10" viewBox="0 0 10 10"><path d="M.7 .9L8.900 9.300M8.900 .9L.7 9.300" fill="none" stroke="#fff4f2" stroke-width="1.300"/></svg><span style="left:30.500px;top:8px">删除</span></div>
<div id="dd"><div style="top:9.500px">主页</div><div style="top:45.500px">用户信息</div><div class="on" style="top:81.500px">看板</div><div style="top:117.500px">退出系统</div></div>
<div id="sb"><div class="up"></div><div class="thumb"></div><div class="down"></div></div>
</body>
</html>
